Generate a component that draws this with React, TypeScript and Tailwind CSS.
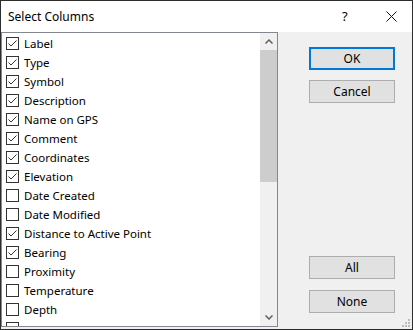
import React from "react";

const columns: { label: string; on: boolean }[] = [
  { label: "Label", on: true },
  { label: "Type", on: true },
  { label: "Symbol", on: true },
  { label: "Description", on: true },
  { label: "Name on GPS", on: true },
  { label: "Comment", on: true },
  { label: "Coordinates", on: true },
  { label: "Elevation", on: true },
  { label: "Date Created", on: false },
  { label: "Date Modified", on: false },
  { label: "Distance to Active Point", on: true },
  { label: "Bearing", on: true },
  { label: "Proximity", on: false },
  { label: "Temperature", on: false },
  { label: "Depth", on: false },
  { label: "", on: false },
];

function Check({ on }: { on: boolean }) {
  return (
    <span className="flex h-[13px] w-[13px] shrink-0 items-center justify-center border border-[#333] bg-white">
      {on && (
        <svg width="11" height="11" viewBox="0 0 11 11">
          <path d="M1.5 5.5 L4 8 L9.5 2.5" fill="none" stroke="#333" strokeWidth="1" />
        </svg>
      )}
    </span>
  );
}

function Btn({ children, primary }: { children: React.ReactNode; primary?: boolean }) {
  return (
    <button
      className={
        primary
          ? "h-[23px] w-[86px] border-2 border-[#0078d7] bg-[#e1e1e1] text-[12px] text-black"
          : "h-[23px] w-[86px] border border-[#adadad] bg-[#e1e1e1] text-[12px] text-black"
      }
    >
      {children}
    </button>
  );
}

export default function App() {
  return (
    <div
      className="flex h-[330px] w-[413px] flex-col overflow-hidden border border-[#2d2d2d] bg-[#f0f0f0] text-[11.5px] text-black"
      style={{ fontFamily: '"Noto Sans", "Open Sans", sans-serif' }}
    >
      {/* title bar */}
      <div className="flex h-[31px] shrink-0 items-center bg-white pl-[7px] text-[12px]">
        <span className="flex-1">Select Columns</span>
        <span className="w-[14px] text-[13px]">?</span>
        <span className="ml-[29px] mr-[15px] flex h-[12px] w-[12px] items-center justify-center">
          <svg width="11" height="11" viewBox="0 0 11 11">
            <path d="M0.5 0.5 L10.5 10.5 M10.5 0.5 L0.5 10.5" stroke="#111" strokeWidth="1" />
          </svg>
        </span>
      </div>

      <div className="relative flex min-h-0 flex-1 pb-[2px]">
        {/* list box */}
        <div className="flex w-[277px] overflow-hidden border border-[#828790] bg-white">
          <div className="min-h-0 flex-1 overflow-hidden pl-[4px] pt-[1px]">
            {columns.map((c, i) => (
              <div key={i} className="flex h-[19px] items-center gap-[5px]">
                <Check on={c.on} />
                <span className="whitespace-nowrap leading-none">{c.label}</span>
              </div>
            ))}
          </div>
          <div className="flex w-[17px] flex-col bg-[#f0f0f0]">
            <div className="flex h-[17px] shrink-0 items-center justify-center">
              <svg width="8" height="5" viewBox="0 0 8 5">
                <path d="M0.5 4.5 L4 1 L7.5 4.5" fill="none" stroke="#606060" strokeWidth="1.5" />
              </svg>
            </div>
            <div className="h-[132px] shrink-0 bg-[#cdcdcd]" />
            <div className="flex-1" />
            <div className="flex h-[17px] shrink-0 items-center justify-center">
              <svg width="8" height="5" viewBox="0 0 8 5">
                <path d="M0.5 0.5 L4 4 L7.5 0.5" fill="none" stroke="#606060" strokeWidth="1.5" />
              </svg>
            </div>
          </div>
        </div>

        {/* buttons */}
        <div className="flex flex-1 flex-col pl-[31px] pt-[15px] pb-[14px]">
          <Btn primary>OK</Btn>
          <div className="mt-[10px]">
            <Btn>Cancel</Btn>
          </div>
          <div className="flex-1" />
          <Btn>All</Btn>
          <div className="mt-[11px]">
            <Btn>None</Btn>
          </div>
        </div>

        {/* size grip */}
        <svg className="absolute bottom-[1px] right-[1px]" width="10" height="10" viewBox="0 0 10 10">
          <rect x="7" y="1" width="2" height="2" fill="#bcbcbc" />
          <rect x="4" y="4" width="2" height="2" fill="#bcbcbc" />
          <rect x="7" y="4" width="2" height="2" fill="#bcbcbc" />
          <rect x="1" y="7" width="2" height="2" fill="#bcbcbc" />
          <rect x="4" y="7" width="2" height="2" fill="#bcbcbc" />
          <rect x="7" y="7" width="2" height="2" fill="#bcbcbc" />
        </svg>
      </div>
    </div>
  );
}
